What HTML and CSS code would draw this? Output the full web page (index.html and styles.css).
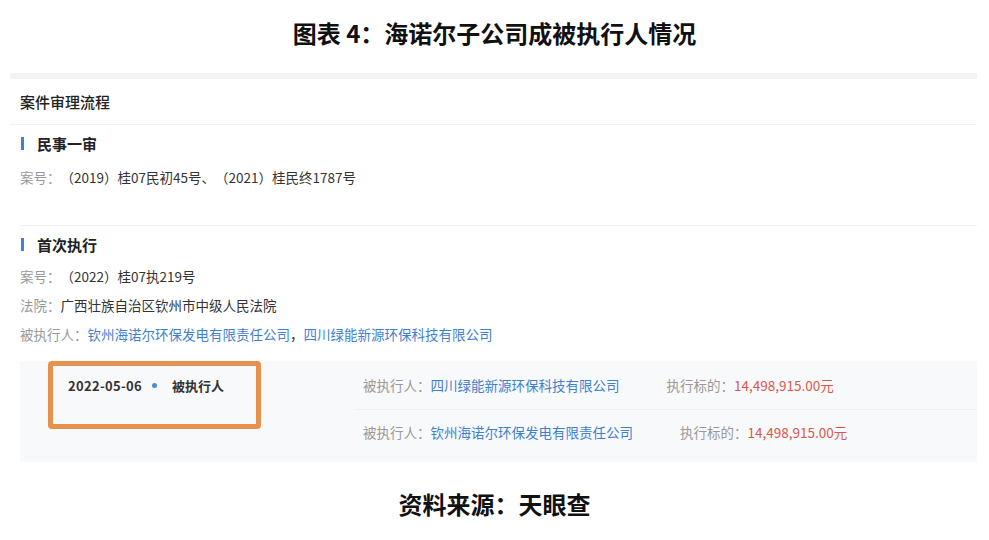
FILE: index.html
```html
<!DOCTYPE html>
<html lang="zh-CN">
<head>
    <meta charset="UTF-8">
    <title>海诺尔子公司成被执行人情况</title>
    <link rel="stylesheet" href="styles.css">
</head>
<body>
    <h1 class="fig-title">图表 4：海诺尔子公司成被执行人情况</h1>

    <div class="panel">
        <div class="panel-head">案件审理流程</div>

        <!-- 民事一审 -->
        <div class="stage stage-first">
            <div class="stage-title">民事一审</div>
            <div class="info-row"><span class="label">案号：</span>（2019）桂07民初45号、（2021）桂民终1787号</div>
        </div>

        <!-- 首次执行 -->
        <div class="stage stage-exec">
            <div class="stage-title">首次执行</div>
            <div class="info-row"><span class="label">案号：</span>（2022）桂07执219号</div>
            <div class="info-row"><span class="label">法院：</span>广西壮族自治区钦州市中级人民法院</div>
            <div class="info-row"><span class="label">被执行人：</span><span class="link">钦州海诺尔环保发电有限责任公司</span>，<span class="link">四川绿能新源环保科技有限公司</span></div>

            <div class="exec-box">
                <div class="exec-date">
                    <span class="date">2022-05-06</span>
                    <span class="dot"></span>
                    <span class="kind">被执行人</span>
                </div>
                <div class="exec-list">
                    <div class="exec-item">
                        <span class="label">被执行人：</span><span class="link">四川绿能新源环保科技有限公司</span>
                        <span class="label target">执行标的：</span><span class="amount">14,498,915.00元</span>
                    </div>
                    <div class="exec-item">
                        <span class="label">被执行人：</span><span class="link">钦州海诺尔环保发电有限责任公司</span>
                        <span class="label target">执行标的：</span><span class="amount">14,498,915.00元</span>
                    </div>
                </div>
                <div class="mark"></div>
            </div>
        </div>
    </div>

    <p class="source">资料来源：天眼查</p>
</body>
</html>
```

FILE: styles.css
```css
body {
    margin: 0;
    background: #fff;
    font-family: "Noto Sans CJK SC", "Noto Sans", sans-serif;
    color: #333;
    text-spacing-trim: space-all;
}
.fig-title {
    margin: 0;
    height: 73px;
    line-height: 66px;
    text-align: center;
    font-size: 24px;
    font-weight: bold;
    color: #111;
}
.panel {
    margin: 0 12px 0 10px;
    border-top: 6px solid #f3f3f3;
}
.panel-head {
    height: 45px;
    line-height: 45px;
    padding-left: 10px;
    font-size: 15px;
    font-weight: 500;
    color: #222;
    border-bottom: 1px solid #f2f2f2;
}
.stage {
    margin-left: 10px;
    padding-top: 8px;
    font-size: 13.5px;
}
.stage-first {
    padding-bottom: 38px;
    border-bottom: 1px solid #f0f0f0;
}
.stage-title {
    display: flex;
    align-items: center;
    height: 20px;
    font-size: 15px;
    font-weight: bold;
    color: #222;
}
.stage-title::before {
    content: "";
    width: 3px;
    height: 13px;
    margin: 0 13px 0 1px;
    background: #3d80e0;
}
.stage-first .stage-title {
    margin-bottom: 14px;
}
.stage-exec .stage-title {
    margin-bottom: 8px;
}
.stage-first .info-row {
    line-height: 20px;
}
.info-row {
    line-height: 29px;
    color: #333;
}
.label {
    color: #999;
}
.link {
    color: #3f7fcf;
}
.exec-box {
    position: relative;
    display: flex;
    margin-top: 12px;
    background: #f8f9fb;
    padding-bottom: 5px;
}
.exec-date {
    width: 287px;
    padding-left: 48px;
    height: 48px;
    display: flex;
    align-items: center;
    font-size: 13px;
    font-weight: bold;
    color: #333;
}
.date {
    letter-spacing: 0.3px;
}
.dot {
    width: 5px;
    height: 5px;
    border-radius: 50%;
    background: #4a8ad8;
    margin: 0 15px 0 10px;
}
.exec-list {
    flex: 1;
}
.exec-item {
    height: 48px;
    line-height: 48px;
    padding-left: 8px;
}
.exec-item + .exec-item {
    border-top: 1px solid #eef0f3;
    height: 47px;
    line-height: 44px;
}
.target {
    margin-left: 44px;
}
.amount {
    color: #d9574a;
}
.mark {
    position: absolute;
    left: 28px;
    top: 0;
    width: 203px;
    height: 58px;
    border: 5px solid #e8914d;
    border-radius: 4px;
}
.source {
    margin: 24px 0 0;
    text-align: center;
    font-size: 24px;
    font-weight: bold;
    color: #111;
}
```
